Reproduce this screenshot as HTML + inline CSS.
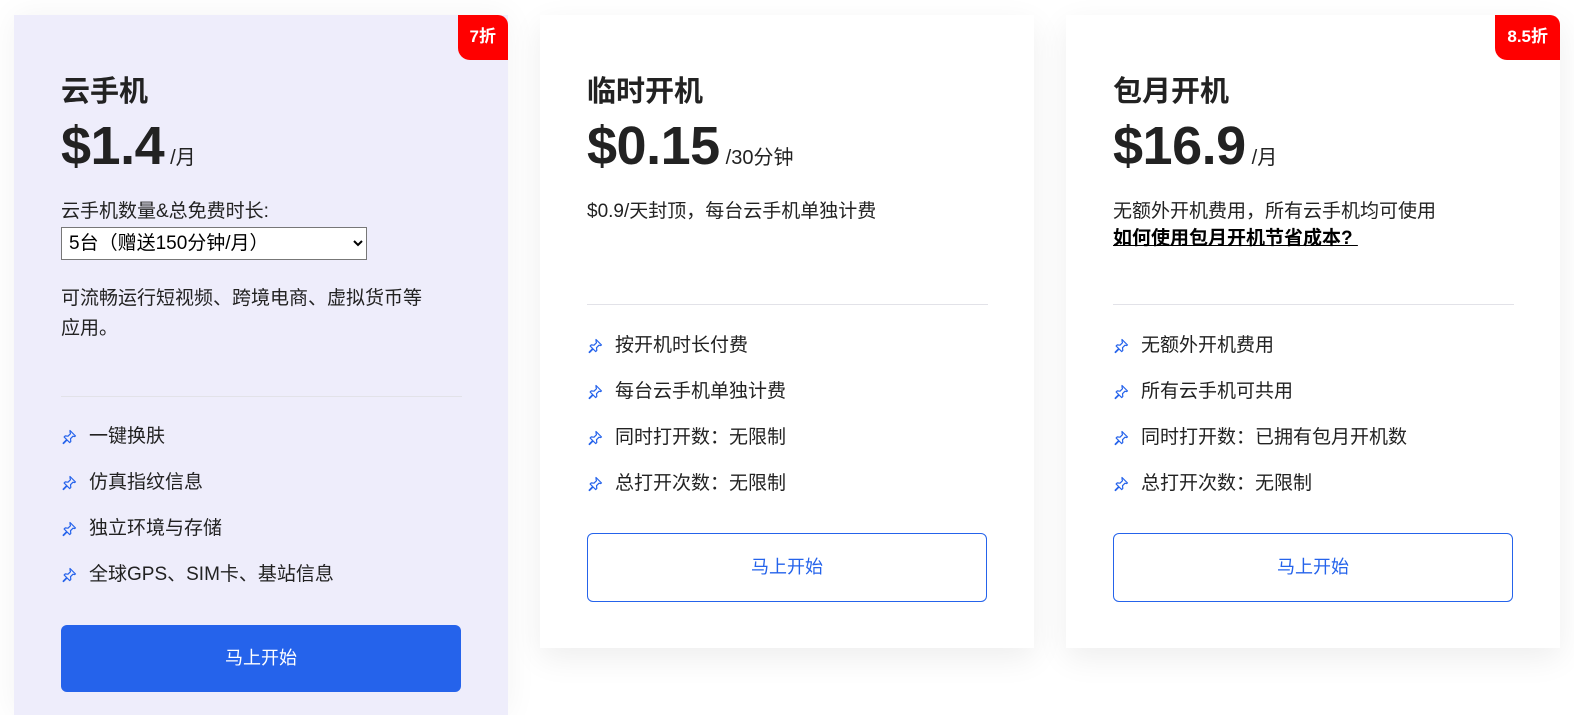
<!DOCTYPE html>
<html><head><meta charset="utf-8"><style>
*{box-sizing:border-box;margin:0;padding:0}
body{width:1574px;height:710px;background:#fff;font-family:"Liberation Sans","Noto Sans CJK SC",sans-serif;color:#222;position:relative;overflow:hidden}
.card{position:absolute;top:15px;width:494px;padding:0 47px;}
.c1{left:14px;height:700px;background:#eeedfb;box-shadow:0 0 30px rgba(0,0,0,.05)}
.c2{left:540px;height:633px;background:#fff;box-shadow:0 10px 30px rgba(0,0,0,.07)}
.c3{left:1066px;height:633px;background:#fff;box-shadow:0 10px 30px rgba(0,0,0,.07)}
.badge{position:absolute;top:0;right:0;background:#f00;color:#fff;font-weight:bold;font-size:17px;height:45px;line-height:44px;padding:0 12px;border-radius:0 10px 0 12px}
h2{position:absolute;top:53px;font-size:29px;font-weight:bold;color:#222}
.price{position:absolute;top:100px;font-size:54px;font-weight:bold;color:#222;letter-spacing:-0.5px;white-space:nowrap}
.price span{font-size:20px;font-weight:normal;letter-spacing:0;margin-left:6px}
.desc{position:absolute;top:183px;font-size:19px;line-height:27px;color:#222}
.hr{position:absolute;left:47px;right:46px;height:1px;background:#e2e2e8}
ul{position:absolute;list-style:none;font-size:19px}
li{height:46px;line-height:26px;white-space:nowrap}
li svg{vertical-align:-3px;margin-right:12px}
.btn{position:absolute;left:47px;width:400px;height:69px;border-radius:6px;font-size:18px;text-align:center;line-height:67px}
.solid{background:#2563eb;color:#fff;height:67px}
.out{border:1px solid #2563eb;color:#2563eb}
select{display:block;width:306px;height:33px;border:1px solid #777;font-size:19px;font-family:inherit;background:#fff;margin-top:2px;padding-left:3px;color:#000}
</style></head><body>
<svg width="0" height="0" style="position:absolute"><defs><symbol id="pin" viewBox="0 0 16 16"><path d="M9 1.5l5.5 5.5-1.2 0.6-1.3-0.4-2.5 2.5 0.3 2.8-1.1 1.1-2.6-2.6-3.6 3.6-0.4-0.4 3.6-3.6-2.6-2.6 1.1-1.1 2.8 0.3 2.5-2.5-0.4-1.3z" fill="none" stroke="#2563eb" stroke-width="1.2" stroke-linejoin="round"/></symbol></defs></svg>

<div class="card c1">
<div class="badge">7折</div>
<h2>云手机</h2>
<div class="price">$1.4<span>/月</span></div>
<div class="desc">云手机数量&amp;总免费时长:<select><option>5台（赠送150分钟/月）</option></select>
<div style="margin-top:24px;line-height:30px">可流畅运行短视频、跨境电商、虚拟货币等<br>应用。</div></div>
<div class="hr" style="top:381px"></div>
<ul style="top:409px">
<li><svg width="16" height="16"><use href="#pin"/></svg>一键换肤</li>
<li><svg width="16" height="16"><use href="#pin"/></svg>仿真指纹信息</li>
<li><svg width="16" height="16"><use href="#pin"/></svg>独立环境与存储</li>
<li><svg width="16" height="16"><use href="#pin"/></svg>全球GPS、SIM卡、基站信息</li>
</ul>
<div class="btn solid" style="top:610px">马上开始</div>
</div>

<div class="card c2">
<h2>临时开机</h2>
<div class="price">$0.15<span>/30分钟</span></div>
<div class="desc">$0.9/天封顶，每台云手机单独计费</div>
<div class="hr" style="top:289px"></div>
<ul style="top:318px">
<li><svg width="16" height="16"><use href="#pin"/></svg>按开机时长付费</li>
<li><svg width="16" height="16"><use href="#pin"/></svg>每台云手机单独计费</li>
<li><svg width="16" height="16"><use href="#pin"/></svg>同时打开数：无限制</li>
<li><svg width="16" height="16"><use href="#pin"/></svg>总打开次数：无限制</li>
</ul>
<div class="btn out" style="top:518px">马上开始</div>
</div>

<div class="card c3">
<div class="badge">8.5折</div>
<h2>包月开机</h2>
<div class="price">$16.9<span>/月</span></div>
<div class="desc">无额外开机费用，所有云手机均可使用<br><b style="text-decoration:underline;color:#000">如何使用包月开机节省成本?&nbsp;</b></div>
<div class="hr" style="top:289px"></div>
<ul style="top:318px">
<li><svg width="16" height="16"><use href="#pin"/></svg>无额外开机费用</li>
<li><svg width="16" height="16"><use href="#pin"/></svg>所有云手机可共用</li>
<li><svg width="16" height="16"><use href="#pin"/></svg>同时打开数：已拥有包月开机数</li>
<li><svg width="16" height="16"><use href="#pin"/></svg>总打开次数：无限制</li>
</ul>
<div class="btn out" style="top:518px">马上开始</div>
</div>
</body></html>
